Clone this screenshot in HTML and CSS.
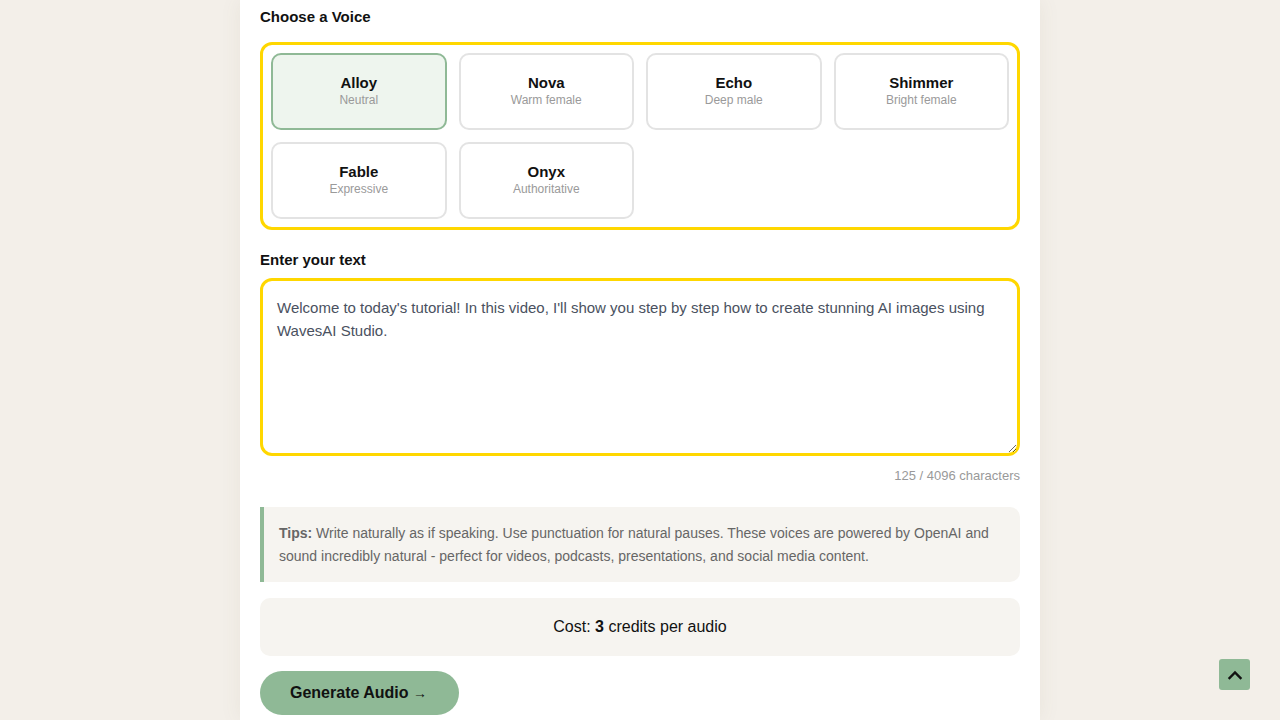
FILE: index.html
```html
<!DOCTYPE html>
<html lang="en">
<head>
<meta charset="utf-8">
<title>WavesAI Studio - Text to Speech</title>
<link rel="stylesheet" href="styles.css">
</head>
<body>
<main class="panel">
  <h2 class="label label-first">Choose a Voice</h2>
  <div class="voice-grid">
    <button class="voice selected"><span class="voice-name">Alloy</span><span class="voice-desc">Neutral</span></button>
    <button class="voice"><span class="voice-name">Nova</span><span class="voice-desc">Warm female</span></button>
    <button class="voice"><span class="voice-name">Echo</span><span class="voice-desc">Deep male</span></button>
    <button class="voice"><span class="voice-name">Shimmer</span><span class="voice-desc">Bright female</span></button>
    <button class="voice"><span class="voice-name">Fable</span><span class="voice-desc">Expressive</span></button>
    <button class="voice"><span class="voice-name">Onyx</span><span class="voice-desc">Authoritative</span></button>
  </div>

  <h2 class="label label-text">Enter your text</h2>
  <textarea class="text-input">Welcome to today's tutorial! In this video, I'll show you step by step how to create stunning AI images using WavesAI Studio.</textarea>
  <div class="char-count">125 / 4096 characters</div>

  <p class="tips"><b class="tips-title">Tips:</b> Write naturally as if speaking. Use punctuation for natural pauses. These voices are powered by OpenAI and sound incredibly natural - perfect for videos, podcasts, presentations, and social media content.</p>

  <div class="cost">Cost:&nbsp;<strong>3</strong>&nbsp;credits per audio</div>

  <button class="generate">Generate Audio <span class="arrow">→</span></button>
</main>

<button class="to-top" aria-label="Scroll to top">
  <svg width="16" height="16" viewBox="0 0 16 16"><path d="M2.5 11 L8 5.5 L13.5 11" fill="none" stroke="#111" stroke-width="2.4" stroke-linecap="square"/></svg>
</button>
</body>
</html>
```

FILE: styles.css
```css
html, body {
  margin: 0;
  padding: 0;
}
body {
  background: #f3efe9;
  font-family: "Liberation Sans", Arial, sans-serif;
  color: #111;
  height: 720px;
  overflow: hidden;
}
.panel {
  width: 800px;
  margin: 0 auto;
  background: #fff;
  box-sizing: border-box;
  padding: 8px 20px 0;
  min-height: 720px;
  box-shadow: 0 0 20px rgba(120, 100, 70, 0.08);
  display: flex;
  flex-direction: column;
  align-items: stretch;
}
.label {
  font-size: 15px;
  font-weight: bold;
  line-height: 18px;
  margin: 0;
  color: #111;
}
.label-first {
  margin-bottom: 16px;
}
.label-text {
  margin-top: 21px;
  margin-bottom: 9px;
}
.voice-grid {
  border: 3px solid #ffd700;
  border-radius: 12px;
  padding: 8px;
  display: grid;
  grid-template-columns: repeat(4, 1fr);
  gap: 12px;
}
.voice {
  height: 77px;
  border: 2px solid #e3e3e3;
  border-radius: 10px;
  background: #fff;
  display: flex;
  flex-direction: column;
  align-items: center;
  justify-content: center;
  font-family: "Liberation Sans", Arial, sans-serif;
  padding: 0 0 2px;
  gap: 1px;
}
.voice.selected {
  border-color: #8fb996;
  background: #eef5ee;
}
.voice-name {
  font-size: 15px;
  font-weight: bold;
  color: #111;
  line-height: 18px;
}
.voice-desc {
  font-size: 12px;
  color: #9a9a9a;
  line-height: 15px;
}
.text-input {
  display: block;
  height: 178px;
  box-sizing: border-box;
  border: 3px solid #ffd700;
  border-radius: 12px;
  padding: 15px 14px 14px;
  font-family: "Liberation Sans", Arial, sans-serif;
  font-size: 15px;
  line-height: 23px;
  color: #4a5160;
  resize: vertical;
  outline: none;
}
.char-count {
  text-align: right;
  font-size: 13px;
  color: #999;
  line-height: 16px;
  margin-top: 12px;
}
.tips {
  margin: 23px 0 0;
  background: #f6f4f0;
  border-left: 4px solid #8fb996;
  border-radius: 0 10px 10px 0;
  padding: 15px 15px 14px;
  font-size: 14px;
  line-height: 23px;
  color: #666;
}
.tips-title {
  font-weight: bold;
  color: #666;
}
.cost {
  margin-top: 16px;
  background: #f6f4f0;
  border-radius: 10px;
  height: 58px;
  display: flex;
  align-items: center;
  justify-content: center;
  font-size: 16px;
  color: #111;
}
.generate {
  align-self: flex-start;
  margin-top: 15px;
  width: 199px;
  height: 44px;
  border: none;
  border-radius: 22px;
  background: #8fb996;
  font-family: "Liberation Sans", Arial, sans-serif;
  font-size: 16px;
  font-weight: bold;
  color: #111;
  padding: 0 2px 0 0;
}
.arrow {
  font-weight: normal;
  font-size: 14px;
}
.to-top {
  position: fixed;
  left: 1219px;
  top: 659px;
  width: 31px;
  height: 31px;
  border: none;
  border-radius: 3px;
  background: #8fb996;
  padding: 0;
  display: flex;
  align-items: center;
  justify-content: center;
}
```
